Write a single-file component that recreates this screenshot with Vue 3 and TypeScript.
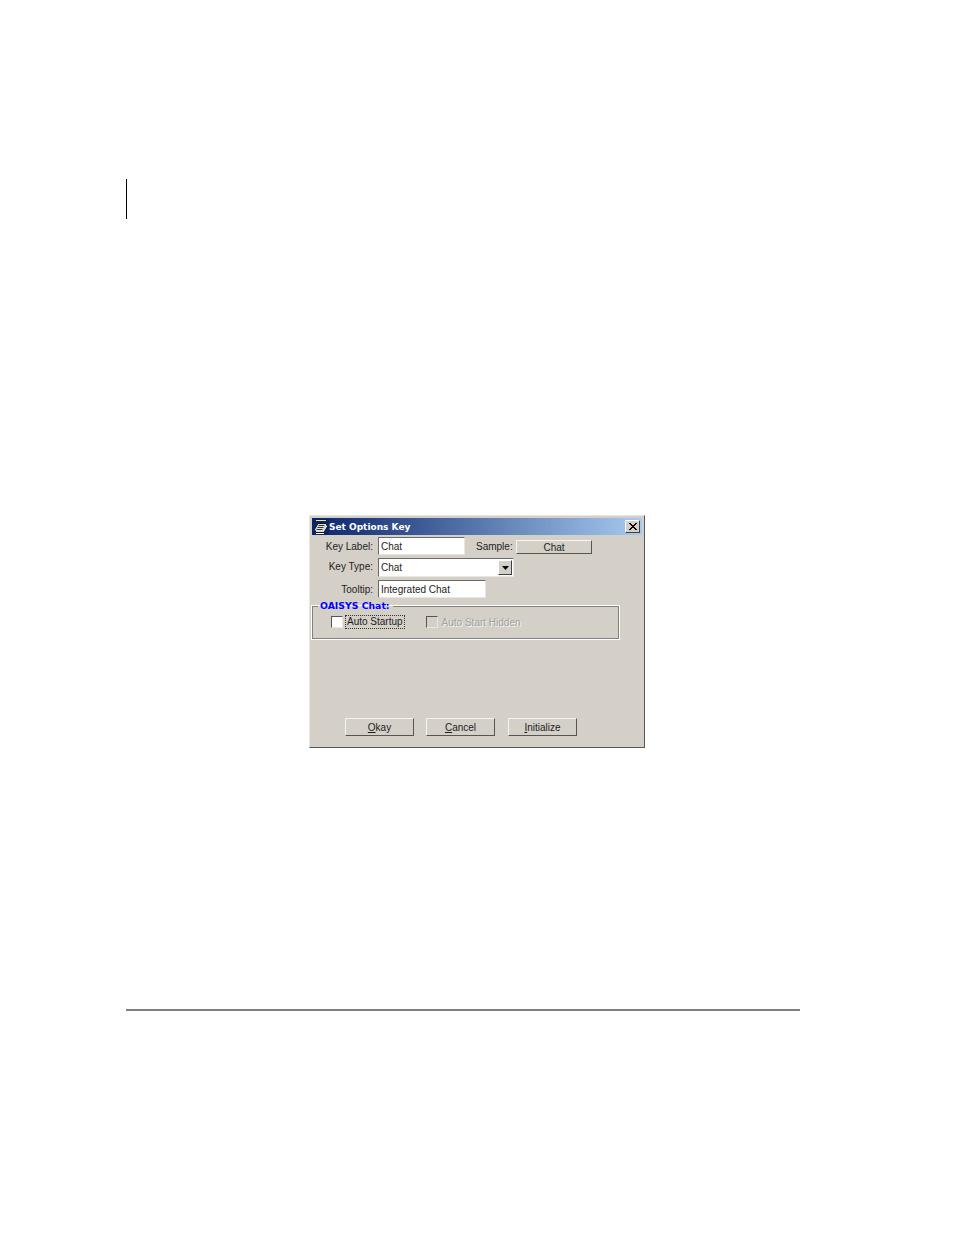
<script setup lang="ts">
const actions = [
  { key: 'O', rest: 'kay' },
  { key: 'C', rest: 'ancel' },
  { key: 'I', rest: 'nitialize' },
]
</script>

<template>
  <div class="page">
    <div class="change-bar"></div>
    <div class="window">
      <div class="titlebar">
        <svg class="app-icon" viewBox="0 0 16 16" width="16" height="16">
          <rect x="0" y="0" width="16" height="16" fill="#0a246a" />
          <path d="M3 1.5h10" stroke="#f4e860" stroke-width="1" />
          <path d="M5 4.5h8l1.500 3L11 13.500H3L1.500 10.500z" fill="#dcdcdc" stroke="#101418" stroke-width="1" />
          <path d="M5.500 6.500h6M4.500 8.500h6M3.500 10.500h6" stroke="#30343c" stroke-width="1" />
          <path d="M3 14.500h8" stroke="#ffffff" stroke-width="1" />
        </svg>
        <span class="title">Set Options Key</span>
        <button class="close" type="button">
          <svg viewBox="0 0 8 7" width="8" height="7">
            <path d="M0 0l7 7M1 0l7 7M7 0L0 7M8 0L1 7" stroke="#000" stroke-width="1" />
          </svg>
        </button>
      </div>

      <div class="body">
        <div class="row row-label">
          <span class="label">Key Label:</span>
          <div class="field field-label">Chat</div>
          <span class="sample-label">Sample:</span>
          <div class="sample-btn">Chat</div>
        </div>

        <div class="row row-type">
          <span class="label label-up">Key Type:</span>
          <div class="field field-type">
            <span class="field-text">Chat</span>
            <span class="drop">
              <svg viewBox="0 0 7 4" width="7" height="4"><path d="M0 0h7L3.500 4z" fill="#000" /></svg>
            </span>
          </div>
        </div>

        <div class="row row-tip">
          <span class="label">Tooltip:</span>
          <div class="field field-tip">Integrated Chat</div>
        </div>

        <fieldset class="group">
          <legend class="legend">OAISYS Chat:</legend>
          <div class="checks">
            <span class="box"></span>
            <span class="check-text focused">Auto Startup</span>
            <span class="box box-off"></span>
            <span class="check-text off">Auto Start Hidden</span>
          </div>
        </fieldset>

        <div class="actions">
          <div v-for="a in actions" :key="a.key" class="btn"><u>{{ a.key }}</u>{{ a.rest }}</div>
        </div>
      </div>
    </div>
    <div class="rule"></div>
  </div>
</template>

<style>
html, body { margin: 0; background: #ffffff; }
</style>

<style scoped>
.page {
  width: 954px;
  height: 1235px;
  box-sizing: border-box;
  padding-top: 179px;
  background: #ffffff;
  overflow: hidden;
  font-family: "Liberation Sans", Arial, sans-serif;
  font-size: 10px;
  color: #1c1c1c;
}
.change-bar {
  width: 1px;
  height: 40px;
  margin-left: 126px;
  background: #000000;
}
.window {
  width: 336px;
  height: 233px;
  margin: 296px 0 0 309px;
  box-sizing: border-box;
  padding: 2px;
  background: #d4d0c8;
  border: 1px solid;
  border-color: #e8e6e1 #555555 #555555 #e8e6e1;
  display: flex;
  flex-direction: column;
}
.titlebar {
  height: 17px;
  flex: none;
  display: flex;
  align-items: center;
  padding-left: 1px;
  background: linear-gradient(90deg, #0a246a, #a6caf0);
}
.app-icon { flex: none; }
.title {
  margin-left: 0;
  color: #ffffff;
  font-family: "DejaVu Sans", sans-serif;
  font-weight: 700;
  font-size: 9px;
  flex: 1;
}
.close {
  width: 15px;
  height: 13px;
  margin-right: 2px;
  padding: 0;
  display: flex;
  align-items: center;
  justify-content: center;
  background: #d4d0c8;
  border: 1px solid;
  border-color: #ffffff #404040 #404040 #ffffff;
}
.body {
  flex: 1;
  display: flex;
  flex-direction: column;
}
.row { display: flex; align-items: center; }
.label {
  width: 61px;
  text-align: right;
  margin-right: 5px;
  flex: none;
}
.label-up { margin-bottom: 3px; }
.row-label { height: 18px; margin-top: 2px; }
.row-type { height: 19px; margin-top: 3px; }
.row-tip { height: 18px; margin-top: 3px; }
.field {
  box-sizing: border-box;
  height: 100%;
  padding-left: 2px;
  background: #ffffff;
  border: 1px solid;
  border-color: #6a6a6a #e8e6e1 #e8e6e1 #6a6a6a;
  display: flex;
  align-items: center;
  flex: none;
}
.field-label { width: 87px; }
.field-type { width: 136px; }
.field-tip { width: 108px; }
.field-text { flex: 1; }
.drop {
  width: 14px;
  height: 15px;
  margin-right: 1px;
  box-sizing: border-box;
  display: flex;
  align-items: center;
  justify-content: center;
  background: #d4d0c8;
  border: 1px solid;
  border-color: #ffffff #404040 #404040 #ffffff;
}
.sample-label { margin-left: 11px; width: 35px; }
.sample-btn {
  width: 76px;
  height: 14px;
  margin-left: 5px;
  margin-top: 1px;
  box-sizing: border-box;
  text-align: center;
  line-height: 13px;
  background: #d4d0c8;
  border: 1px solid;
  border-color: #f4f4f2 #555555 #555555 #f4f4f2;
}
.group {
  margin: 3px 0 0 0;
  padding: 0;
  width: 307px;
  height: 38px;
  box-sizing: border-box;
  border: 1px solid #808080;
  box-shadow: 0 0 0 1px #ffffff;
  min-width: 0;
}
.legend {
  margin-left: 5px;
  padding: 0 3px 0 2px;
  color: #0000ff;
  font-family: "DejaVu Sans", sans-serif;
  font-weight: 700;
  font-size: 9.300px;
  line-height: 10px;
}
.checks {
  display: flex;
  align-items: center;
  height: 12px;
  margin-top: 5px;
  padding-left: 18px;
}
.box {
  width: 12px;
  height: 12px;
  box-sizing: border-box;
  flex: none;
  background: #ffffff;
  border: 1px solid;
  border-color: #555555 #e8e6e1 #e8e6e1 #555555;
}
.box-off { background: #d4d0c8; margin-left: 22px; }
.check-text { margin-left: 3px; }
.focused { outline: 1px dotted #333333; outline-offset: 0; padding: 0 1px; line-height: 12px; }
.off { color: #a0a0a0; margin-left: 4px; text-shadow: 1px 1px 0 #f4f4f2; }
.actions {
  display: flex;
  gap: 12px;
  margin-top: auto;
  margin-bottom: 9px;
  padding-left: 33px;
}
.btn {
  width: 69px;
  height: 18px;
  box-sizing: border-box;
  text-align: center;
  line-height: 17px;
  background: #d4d0c8;
  border: 1px solid;
  border-color: #f4f4f2 #555555 #555555 #f4f4f2;
}
.btn + .btn + .btn { margin-left: 1px; }
.rule {
  width: 674px;
  height: 2px;
  margin: 261px 0 0 126px;
  background: #808080;
}
</style>
